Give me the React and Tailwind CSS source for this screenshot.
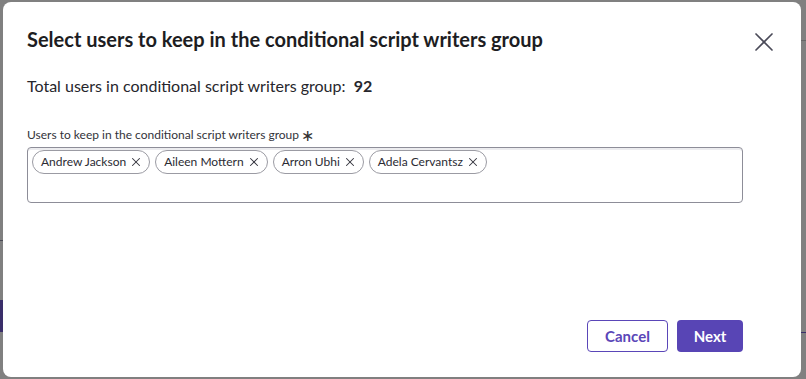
import React from 'react';
import { X } from 'lucide-react';

const users = ['Andrew Jackson', 'Aileen Mottern', 'Arron Ubhi', 'Adela Cervantsz'];

const Chip = ({ name }) => (
  <span className="flex h-[24px] items-center gap-[3px] rounded-full border border-[#9b9ba3] pl-[8px] pr-[6px] text-[12px] text-[#2b2b33]">
    {name}
    <X className="h-[14px] w-[14px] text-[#34343e]" strokeWidth={1.8} />
  </span>
);

export default function App() {
  return (
    <div className="relative h-screen w-screen overflow-hidden bg-[#808080] pl-[3px] pt-[2px] font-['Lato','Liberation_Sans',sans-serif]">
      {/* faint page behind the overlay */}
      <div className="absolute left-0 top-[240px] h-[1px] w-[3px] bg-[#4a4a55]" />
      <div className="absolute left-0 top-[300px] h-[32px] w-[3px] bg-[#3a2f6a]" />
      <div className="absolute right-0 top-[40px] h-[1px] w-[5px] bg-[#666]" />
      <div className="absolute right-0 top-[332px] h-[1px] w-[5px] bg-[#3a2f6a]" />

      <div className="relative flex h-[375px] w-[798px] flex-col rounded-[8px] bg-white px-[24px] pb-[25px] pt-[22px]">
        <div className="flex items-start justify-between">
          <h1 className="text-[20px] font-bold leading-[30px] text-[#1d1d22]">
            Select users to keep in the conditional script writers group
          </h1>
          <button className="-mr-[3px] mt-[2px] text-[#4a4a58]">
            <X className="h-[32px] w-[32px]" strokeWidth={1.25} />
          </button>
        </div>

        <p className="mt-[17px] text-[16px] leading-[22px] text-[#26262c]">
          Total users in conditional script writers group:&nbsp; <span className="font-bold">92</span>
        </p>

        <label className="mt-[30px] flex items-center gap-[2px] text-[12px] leading-[16px] text-[#33333a]">
          Users to keep in the conditional script writers group
          <span className="text-[16px] leading-[16px] text-[#333]">∗</span>
        </label>

        <div className="mt-[4px] h-[56px] w-[716px] rounded-[4px] border border-[#8d8d98] shadow-[inset_0_2px_0_#ececef] px-[4px] pt-[2px]">
          <div className="flex flex-wrap gap-[5px]">
            {users.map((u) => (
              <Chip key={u} name={u} />
            ))}
          </div>
        </div>

        <div className="mt-auto flex w-[716px] justify-end gap-[9px]">
          <button className="h-[32px] w-[81px] rounded-[4px] border border-[#5a46b8] text-[15px] font-bold text-[#5a46b8]">
            Cancel
          </button>
          <button className="h-[32px] w-[66px] rounded-[4px] bg-[#5845b5] text-[15px] font-bold text-white">
            Next
          </button>
        </div>
      </div>
    </div>
  );
}
